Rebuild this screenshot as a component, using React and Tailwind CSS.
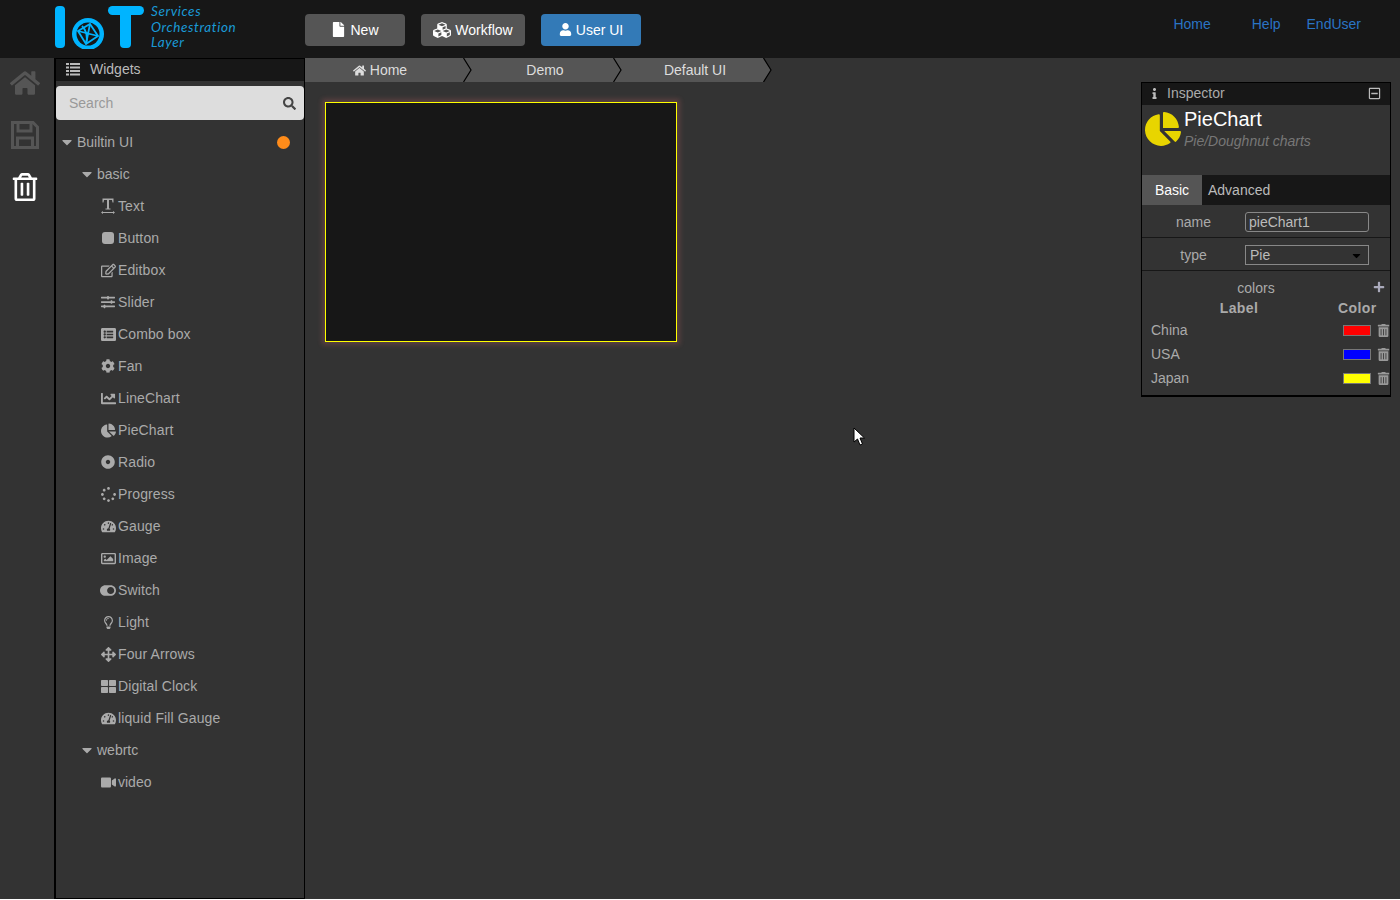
import { FaChartLine, FaChartPie, FaCog, FaCubes, FaDotCircle, FaRegEdit, FaFile, FaHome, FaInfo, FaPlus, FaRegImage, FaRegLightbulb, FaListAlt, FaRegMinusSquare, FaRegTrashAlt, FaArrowsAlt, FaSearch, FaSlidersH, FaSpinner, FaTachometerAlt, FaThLarge, FaToggleOn, FaTrashAlt, FaUser, FaVideo, FaCaretDown } from 'react-icons/fa';

const TextIcon = ({ className }) => (
  <svg viewBox="0 0 16 16" width="16" height="16" className={className} fill="currentColor">
    <path d="M2.500 0.500h11v4h-1l-.5-2.500H9v8.500h1.500v1h-5v-1H7V2H4L3.500 4.500h-1z" />
    <path d="M1 14.500l2-1.500v1h10v-1l2 1.500-2 1.500v-1H3v1z" />
  </svg>
);

const ButtonIcon = ({ className }) => (
  <svg viewBox="0 0 14 14" width="14" height="14" className={className}>
    <rect x="1" y="1" width="12" height="12" rx="3" fill="currentColor" />
  </svg>
);

const widgets = [
  { name: 'Text', icon: TextIcon },
  { name: 'Button', icon: ButtonIcon },
  { name: 'Editbox', icon: FaRegEdit },
  { name: 'Slider', icon: FaSlidersH, size: 'text-[14px]' },
  { name: 'Combo box', icon: FaListAlt },
  { name: 'Fan', icon: FaCog, size: 'text-[14px]' },
  { name: 'LineChart', icon: FaChartLine },
  { name: 'PieChart', icon: FaChartPie },
  { name: 'Radio', icon: FaDotCircle, size: 'text-[14px]' },
  { name: 'Progress', icon: FaSpinner },
  { name: 'Gauge', icon: FaTachometerAlt },
  { name: 'Image', icon: FaRegImage },
  { name: 'Switch', icon: FaToggleOn, size: 'text-[17px]' },
  { name: 'Light', icon: FaRegLightbulb, size: 'text-[13px]' },
  { name: 'Four Arrows', icon: FaArrowsAlt },
  { name: 'Digital Clock', icon: FaThLarge },
  { name: 'liquid Fill Gauge', icon: FaTachometerAlt },
];

const colors = [
  { label: 'China', swatch: 'bg-[#ff0000]' },
  { label: 'USA', swatch: 'bg-[#0000ff]' },
  { label: 'Japan', swatch: 'bg-[#ffff00]' },
];

const Logo = () => (
  <div className="flex items-start">
    <svg width="90" height="44" viewBox="0 0 90 44" className="mt-[5px] shrink-0">
      <rect x="0" y="1" width="10" height="42" rx="4" fill="#00b4ff" />
      <circle cx="33" cy="29" r="16" fill="#00b4ff" />
      <circle cx="33" cy="29" r="11.500" fill="#171717" />
      <g stroke="#00b4ff" strokeWidth="1.800" fill="none">
        <path d="M23 26 L35 19 L43 31 L31 39 Z" />
        <path d="M35 19 L31 39 M23 26 L43 31" />
        <path d="M27 21 Q34 28 31 39" />
      </g>
      <rect x="53" y="1" width="36" height="9" rx="4.500" fill="#00b4ff" />
      <rect x="65" y="1" width="11" height="42" rx="4" fill="#00b4ff" />
    </svg>
    <div className="ml-[6px] mt-[4px] font-['Lato',sans-serif] italic text-[13.5px] leading-[15.500px] tracking-[0.6px] text-[#1a9ad6]">
      <div>Services</div>
      <div>Orchestration</div>
      <div>Layer</div>
    </div>
  </div>
);

const ToolButton = ({ icon: Icon, label, className, iconClass }) => (
  <button className={`mt-px h-8 flex items-center justify-center gap-[4px] rounded text-sm text-white ${className}`}>
    <Icon className={iconClass} />
    {label}
  </button>
);

const Crumb = ({ children }) => (
  <div className="relative w-[150px] h-full bg-[#555] flex items-center justify-center gap-1 pl-[14px] text-sm text-[#ddd] first:w-[158px] first:pl-0 first:pr-[8px]">
    {children}
    <svg width="9" height="24" viewBox="0 0 9 24" className="absolute left-full top-0 z-10">
      <path d="M0 0 L8 12 L0 24 Z" fill="#555" />
      <path d="M0.500 0 L8 12 L0.500 24" fill="none" stroke="#000" strokeWidth="1.200" />
    </svg>
  </div>
);

const Inspector = () => (
  <div className="absolute left-[1141px] top-[82px] w-[250px] h-[315px] border border-black border-b-2 bg-[#333] text-sm text-[#aaa]">
    <div className="h-[22px] pb-[2px] bg-[#171717] flex items-center pl-[7px] pr-[9px]">
      <FaInfo className="text-[11px] text-[#bbb]" />
      <span className="ml-[7px]">Inspector</span>
      <FaRegMinusSquare className="ml-auto text-[13px] text-[#bbb]" />
    </div>
    <div className="h-[70px] flex pl-[3px] pt-[6px]">
      <FaChartPie className="text-[36px] text-[#e8d500] shrink-0" />
      <div className="ml-[3px]">
        <div className="text-[20px] leading-[24px] -mt-[4px] text-white">PieChart</div>
        <div className="italic text-[#777] leading-[20px]">Pie/Doughnut charts</div>
      </div>
    </div>
    <div className="h-[30px] bg-[#171717] flex items-center">
      <div className="w-[60px] h-full bg-[#555] flex items-center justify-center text-white">Basic</div>
      <div className="ml-[6px] text-[#bbb]">Advanced</div>
    </div>
    <div className="h-[33px] pt-[2px] flex items-center border-b border-[#171717]">
      <div className="w-[103px] text-center">name</div>
      <input readOnly value="pieChart1" className="w-[124px] h-5 px-[3px] rounded-[3px] border border-[#888] bg-transparent text-sm text-[#bbb] outline-none" />
    </div>
    <div className="h-[33px] pt-[2px] flex items-center border-b border-[#171717]">
      <div className="w-[103px] text-center">type</div>
      <div className="w-[124px] h-5 pl-[4px] pr-[5px] border border-[#888] flex items-center justify-between text-[#bbb]">
        Pie
        <FaCaretDown className="text-[13px] text-black" />
      </div>
    </div>
    <div className="relative h-[27px] pt-[7px] leading-[20px] text-center pr-[20px]">
      colors
      <FaPlus className="absolute right-[5px] top-[10px] text-[12px] text-[#aab]" />
    </div>
    <div className="h-[20px] flex items-center font-bold tracking-[0.4px]">
      <div className="w-[196px] text-center pr-[2px]">Label</div>
      <div>Color</div>
    </div>
    {colors.map((c) => (
      <div key={c.label} className="h-6 flex items-center pl-[9px]">
        <span>{c.label}</span>
        <div className={`ml-auto w-[28px] h-[11px] border border-[#777] ${c.swatch}`} />
        <FaTrashAlt className="ml-[6px] text-[13px] text-[#999]" />
      </div>
    ))}
  </div>
);

const Sidebar = () => (
  <aside className="w-[251px] shrink-0 h-full border-l-2 border-r border-b border-t border-black flex flex-col bg-[#333] text-sm text-[#aaa]">
    <div className="h-[22px] pb-[2px] bg-[#171717] flex items-center pl-[10px] text-[#bbb]">
      <svg width="14" height="13" viewBox="0 0 14 13" fill="currentColor">
        <path d="M0 0h3v2H0zM4 0h10v2H4zM0 3.500h3v2H0zM4 3.500h10v2H4zM0 7h3v2H0zM4 7h10v2H4zM0 10.500h3v2H0zM4 10.500h10v2H4z" />
      </svg>
      <span className="ml-[10px]">Widgets</span>
    </div>
    <div className="mt-[5px] h-[34px] bg-[#ddd] rounded-[4px] flex items-center pl-[13px] pr-[8px]">
      <span className="text-[#999]">Search</span>
      <FaSearch className="ml-auto text-[13px] text-[#444]" />
    </div>
    <div className="mt-[6px]">
      <div className="h-8 flex items-center pl-[5px]">
        <FaCaretDown className="text-[16px] w-[12px] text-[#aaa]" />
        <span className="ml-[4px]">Builtin UI</span>
        <span className="ml-auto mr-[14px] w-[13px] h-[13px] rounded-full bg-[#ff8c1a]" />
      </div>
      <div className="h-8 flex items-center pl-[25px]">
        <FaCaretDown className="text-[16px] w-[12px] text-[#aaa]" />
        <span className="ml-[4px]">basic</span>
      </div>
      {widgets.map((w) => (
        <div key={w.name} className="h-8 flex items-center pl-[44px] tracking-[0.12px]">
          <span className="w-[16px] mr-[2px] flex justify-center shrink-0">
            <w.icon className={w.size || 'text-[15px]'} />
          </span>
          <span>{w.name}</span>
        </div>
      ))}
      <div className="h-8 flex items-center pl-[25px]">
        <FaCaretDown className="text-[16px] w-[12px] text-[#aaa]" />
        <span className="ml-[4px]">webrtc</span>
      </div>
      <div className="h-8 flex items-center pl-[44px]">
        <span className="w-[16px] mr-[2px] flex justify-center shrink-0">
          <FaVideo className="text-[15px]" />
        </span>
        <span>video</span>
      </div>
    </div>
  </aside>
);

export default function App() {
  return (
    <div className="relative h-[899px] flex flex-col overflow-hidden bg-[#333] font-['Liberation_Sans',Arial,sans-serif]">
      <header className="h-[58px] shrink-0 bg-[#171717] flex">
        <div className="w-[305px] shrink-0 pl-[55px]">
          <Logo />
        </div>
        <div className="flex items-center gap-4">
          <ToolButton icon={FaFile} iconClass="text-[15px]" label="New" className="w-[100px] bg-[#555]" />
          <ToolButton icon={FaCubes} iconClass="text-[18px]" label="Workflow" className="w-[104px] bg-[#555]" />
          <ToolButton icon={FaUser} iconClass="text-[13px]" label="User UI" className="w-[100px] bg-[#337ab7]" />
        </div>
        <nav className="ml-auto flex items-center h-[48px] text-sm text-[#2a74c4]">
          <a className="mr-[41px]">Home</a>
          <a className="mr-[26px]">Help</a>
          <a className="mr-[39px]">EndUser</a>
        </nav>
      </header>
      <div className="flex-1 flex min-h-0">
        <div className="w-[54px] shrink-0 flex flex-col items-center pt-[10px] pr-[4px]">
          <FaHome className="text-[30px] text-[#555]" />
          <svg width="28" height="28" viewBox="0 0 28 28" className="mt-[23px] text-[#555]" fill="none" stroke="currentColor" strokeWidth="3">
            <path d="M1.500 1.500H22L26.500 6V26.500H1.500Z" />
            <path d="M7 2V10H20V2" />
            <path d="M6.500 26V17H21.500V26" />
          </svg>
          <FaRegTrashAlt className="text-[28px] text-white mt-[24px]" />
        </div>
        <Sidebar />
        <main className="flex-1">
          <div className="h-6 flex">
            <Crumb>
              <FaHome className="text-[13px]" /> Home
            </Crumb>
            <Crumb>Demo</Crumb>
            <Crumb>Default UI</Crumb>
          </div>
          <div className="ml-5 mt-5 w-[352px] h-[240px] bg-[#171717] border border-[#ffff00] shadow-[0_0_5px_3px_rgba(255,120,120,0.2)]" />
        </main>
      </div>
      <Inspector />
      <svg width="14" height="20" viewBox="0 0 14 20" className="absolute left-[853px] top-[427px]">
        <path d="M1 1 L1 15 L4.500 12 L7 18 L9.500 17 L7 11 L11.500 11 Z" fill="#fff" stroke="#000" strokeWidth="1" />
      </svg>
    </div>
  );
}
